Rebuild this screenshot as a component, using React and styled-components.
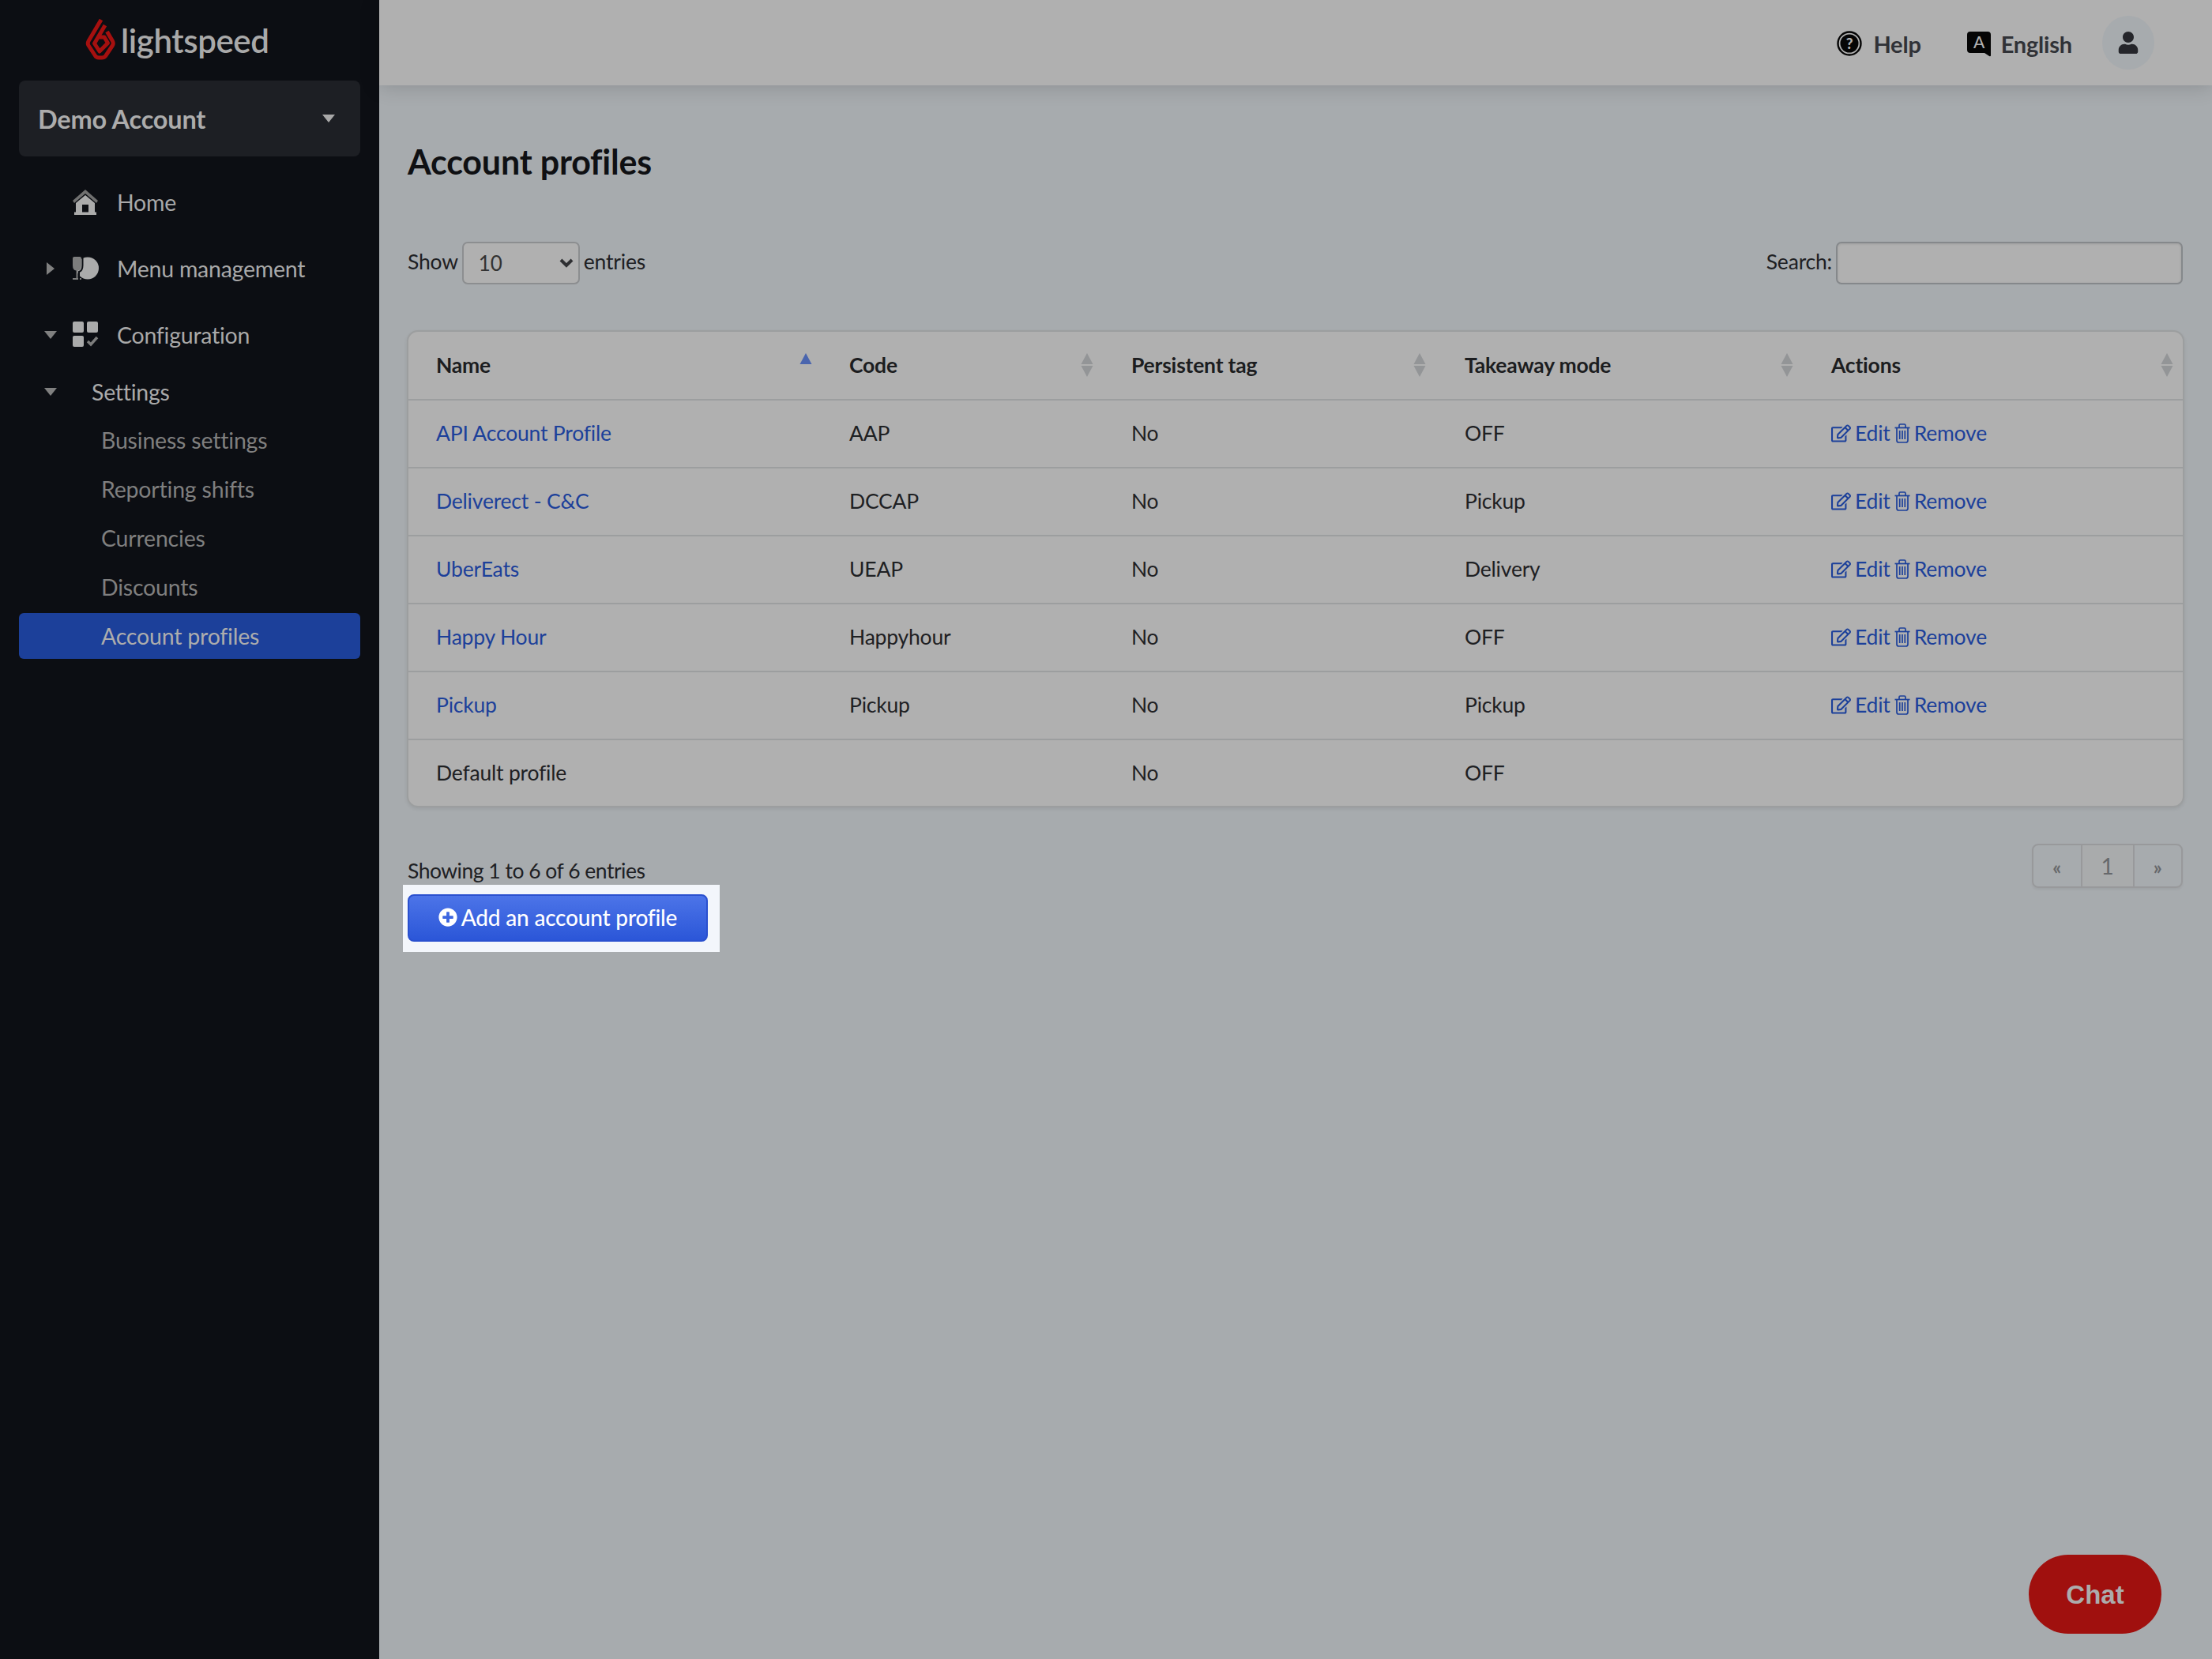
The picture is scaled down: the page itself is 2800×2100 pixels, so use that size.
import React from "react";
import styled, { createGlobalStyle } from "styled-components";
import { FaRegEdit, FaPlusCircle, FaUser } from "react-icons/fa";

const Global = createGlobalStyle`
  html, body { margin: 0; padding: 0; }
  body { font-family: Lato, "Noto Sans", sans-serif; background: #a7abae; }
  * { box-sizing: border-box; }
`;

const Page = styled.div`
  position: relative;
  display: flex;
  width: 2800px;
  height: 2100px;
  overflow: hidden;
  background: #a7abae;
  color: #1e2023;
`;

const Sidebar = styled.aside`
  flex: 0 0 480px;
  background: #0c0e13;
  padding: 0 24px;
  display: flex;
  flex-direction: column;
`;

const Brand = styled.div`
  height: 102px;
  padding: 22px 0 0 84px;
  display: flex;
  align-items: flex-start;
  gap: 7px;
`;

const BrandName = styled.span`
  font-size: 42px;
  line-height: 58px;
  font-weight: 600;
  color: #a9a9a9;
  letter-spacing: -0.4px;
`;

const AccountSelect = styled.div`
  height: 96px;
  background: #1d1f24;
  border-radius: 8px;
  padding: 0 32px 0 24px;
  display: flex;
  align-items: center;
  justify-content: space-between;
  margin-bottom: 16px;
`;

const AccountName = styled.span`
  font-size: 32.5px;
  font-weight: 700;
  color: #acacac;
  letter-spacing: -0.2px;
`;

const Caret = styled.span`
  display: block;
  width: 0;
  height: 0;
  border-style: solid;
  border-color: transparent;
  border-width: ${(p) => (p.$right ? "8px 0 8px 10px" : "10px 8px 0 8px")};
  ${(p) => (p.$right ? "border-left-color" : "border-top-color")}: ${(p) => p.$color || "#808080"};
`;

const NavItem = styled.div`
  height: ${(p) => p.$h}px;
  display: flex;
  align-items: center;
  color: ${(p) => p.$color};
  font-size: 28.5px;
  letter-spacing: -0.25px;
`;

const CaretSlot = styled.span`
  flex: 0 0 68px;
  display: flex;
  justify-content: center;
  margin-left: 6px;
  margin-right: -6px;
  width: 68px;
`;

const IconSlot = styled.span`
  flex: 0 0 56px;
  display: flex;
  align-items: center;
  svg { display: block; }
`;

const SettingsLabel = styled.span`
  margin-left: 24px;
`;

const SubItem = styled.div`
  height: ${(p) => (p.$active ? 58 : 62)}px;
  display: flex;
  align-items: center;
  padding-left: 104px;
  padding-bottom: ${(p) => (p.$active ? 1 : 0)}px;
  font-size: 28.5px;
  letter-spacing: -0.2px;
  border-radius: 6px;
  margin-top: ${(p) => (p.$active ? 2 : 0)}px;
  color: ${(p) => (p.$active ? "#adadad" : "#7f7f7f")};
  background: ${(p) => (p.$active ? "#1c409a" : "transparent")};
`;

const Main = styled.main`
  flex: 1;
  display: flex;
  flex-direction: column;
  min-width: 0;
`;

const TopBar = styled.header`
  height: 108px;
  background: #b0b0b0;
  box-shadow: 0 2px 24px rgba(0, 0, 0, 0.16);
  display: flex;
  align-items: center;
  justify-content: flex-end;
  padding: 0 73px 0 0;
  flex: none;
`;

const TopLink = styled.div`
  display: flex;
  align-items: center;
  gap: ${(p) => p.$gap}px;
  font-size: 29px;
  font-weight: 700;
  letter-spacing: -0.2px;
  color: #303237;
  margin-right: ${(p) => p.$mr}px;
  margin-top: 2px;
  svg { display: block; }
`;

const Avatar = styled.div`
  width: 66px;
  height: 68px;
  border-radius: 50%;
  background: #a7abae;
  display: flex;
  align-items: center;
  justify-content: center;
  color: #25262b;
`;

const Content = styled.div`
  padding: 0 37px 0 36px;
  flex: 1;
  display: flex;
  flex-direction: column;
`;

const Title = styled.h1`
  margin: 68px 0 0;
  font-size: 43px;
  line-height: 58px;
  font-weight: 700;
  letter-spacing: -0.2px;
  color: #0f1013;
`;

const Controls = styled.div`
  display: flex;
  justify-content: space-between;
  align-items: center;
  margin-top: 72px;
  font-size: 26.5px;
  letter-spacing: -0.2px;
  color: #1e2023;
`;

const Label = styled.label`
  display: flex;
  align-items: center;
  gap: 5px;
`;

const LabelText = styled.span`
  position: relative;
  top: -2px;
`;

const FakeSelect = styled.div`
  width: 149px;
  height: 54px;
  border: 2px solid #8c8e90;
  border-radius: 7px;
  background: #b0b0b0;
  display: flex;
  align-items: center;
  justify-content: space-between;
  padding: 0 6px 0 19px;
  font-size: 26px;
  color: #333;
`;

const SearchBox = styled.div`
  width: 439px;
  height: 54px;
  border: 2px solid #85888b;
  border-radius: 7px;
  background: #b0b0b0;
  box-shadow: inset 0 1px 3px rgba(0, 0, 0, 0.1);
`;

const TableCard = styled.div`
  margin: 58px 0 0 -1px;
  border: 2px solid #9c9e9f;
  border-radius: 14px;
  background: #b0b0b0;
  overflow: hidden;
  width: 2250px;
  box-shadow: 0 2px 4px rgba(0, 0, 0, 0.08);
`;

const Table = styled.table`
  width: 100%;
  table-layout: fixed;
  border-collapse: collapse;
  font-size: 26.5px;
  letter-spacing: -0.2px;
`;

const Th = styled.th`
  position: relative;
  height: 86px;
  padding: 0 0 2px 35px;
  text-align: left;
  font-weight: 700;
  color: #1c1d20;
  border-bottom: 2px solid #9c9e9f;
`;

const Td = styled.td`
  height: ${(p) => (p.$last ? 84 : 86)}px;
  padding: 0 0 2px 35px;
  color: #1e2023;
  border-bottom: ${(p) => (p.$last ? "none" : "2px solid #9c9e9f")};
`;

const BlueLink = styled.a`
  color: #1c409a;
  text-decoration: none;
`;

const Actions = styled.div`
  display: flex;
  align-items: center;
  gap: 5px;
`;

const ActionLink = styled.a`
  display: flex;
  align-items: center;
  gap: 5px;
  color: #1c409a;
  svg { display: block; }
`;

const SortIcons = styled.span`
  position: absolute;
  right: ${(p) => p.$right}px;
  top: 27px;
  width: 16px;
  height: 30px;
  display: block;
  svg { display: block; }
`;

const Footer = styled.div`
  display: flex;
  justify-content: space-between;
  align-items: flex-start;
  margin-top: 46px;
`;

const FooterLeft = styled.div`
  display: flex;
  flex-direction: column;
  align-items: flex-start;
`;

const Info = styled.div`
  font-size: 26.5px;
  letter-spacing: -0.5px;
  line-height: 34px;
  margin-top: 17px;
  color: #1e2023;
`;

const Highlight = styled.div`
  margin: 1px 0 0 -6px;
  padding: 12px 15px 13px 6px;
  background: #f3f6fb;
`;

const AddButton = styled.button`
  width: 380px;
  height: 60px;
  border-radius: 8px;
  border: 2px solid #2a50cf;
  background: linear-gradient(#4c74e8, #2b56d8);
  color: #fff;
  font: 500 28px Lato, sans-serif;
  letter-spacing: -0.2px;
  display: flex;
  align-items: center;
  justify-content: center;
  gap: 5px;
  padding: 0 0 2px;
  svg { display: block; }
`;

const Pagination = styled.div`
  display: flex;
  width: 191px;
  height: 56px;
  border: 2px solid #98999b;
  border-radius: 8px;
  overflow: hidden;
  box-shadow: 0 2px 3px rgba(0, 0, 0, 0.05);
`;

const PageCell = styled.div`
  flex: ${(p) => (p.$current ? "0 0 68px" : "1")};
  display: flex;
  align-items: center;
  justify-content: center;
  color: #66686b;
  font-size: ${(p) => (p.$current ? 28 : 24)}px;
  font-weight: ${(p) => (p.$current ? 400 : 700)};
  padding-top: ${(p) => (p.$current ? 0 : 2)}px;
  background: ${(p) => (p.$current ? "#a9abac" : "transparent")};
  border-left: ${(p) => (p.$current ? "2px solid #98999b" : "none")};
  border-right: ${(p) => (p.$current ? "2px solid #98999b" : "none")};
`;

const ChatButton = styled.div`
  position: absolute;
  left: 2568px;
  top: 1968px;
  width: 168px;
  height: 100px;
  border-radius: 50px;
  background: #a0100e;
  color: #acacac;
  font: 700 33px "Liberation Sans", Arial, sans-serif;
  display: flex;
  align-items: center;
  justify-content: center;
  padding-top: 2px;
`;

const LogoMark = () => (
  <svg width="38" height="54" viewBox="0 0 38 54" fill="none" stroke="#a6100f" strokeWidth="5" strokeLinejoin="round">
    <path d="M20 3 L4 30 Q2.5 33 4 35.5 L12.5 48.5 Q14 51 17 51 H21 Q24 51 25.5 49 L34.5 35.5 Q36 33 34.5 30 L27.5 18" />
    <path d="M25 10 L11.5 33 L18 43 L28.5 32.5 L24 25 H17" />
  </svg>
);

const HomeIcon = () => (
  <svg width="32" height="32" viewBox="0 0 32 32">
    <path d="M0 14 L16 0 L32 14 L30 17 L16 5 L2 17 Z" fill="#707070" />
    <path d="M4 17 L16 7 L28 17 V29 H20 V19 H12 V29 H4 Z" fill="#ababab" />
    <path d="M2 28.5 H30 V32 H2 Z" fill="#ababab" />
  </svg>
);

const MenuIcon = () => (
  <svg width="33" height="30" viewBox="0 0 33 30">
    <circle cx="19" cy="14.5" r="14" fill="#ababab" />
    <path d="M0 2 Q0 0 2 0 H9 Q11 0 11 2 V11 Q11 17 6.5 17.5 V27 H11 V29 H0 V27 H4.5 V17.5 Q0 17 0 11 Z" fill="#7d7d7d" />
    <path d="M12.5 0 V11 Q12.5 18 8 19 V29" fill="none" stroke="#0c0e13" strokeWidth="2" />
  </svg>
);

const ConfigIcon = () => (
  <svg width="34" height="34" viewBox="0 0 34 34">
    <rect x="0" y="0" width="14" height="14" rx="2" fill="#ababab" />
    <rect x="18" y="0" width="14" height="14" rx="2" fill="#ababab" />
    <rect x="0" y="18" width="14" height="14" rx="2" fill="#ababab" />
    <path d="M19 25 L23 29 L31 20" fill="none" stroke="#7d7d7d" strokeWidth="3.4" />
  </svg>
);

const HelpIcon = () => (
  <svg width="32" height="32" viewBox="0 0 32 32">
    <circle cx="16" cy="16" r="14.5" fill="none" stroke="#050505" strokeWidth="2.4" />
    <circle cx="16" cy="16" r="11.5" fill="#050505" />
    <text x="16" y="22.5" textAnchor="middle" fontFamily="Lato, sans-serif" fontWeight="900" fontSize="19" fill="#b0b0b0">?</text>
  </svg>
);

const LangIcon = () => (
  <svg width="32" height="33" viewBox="0 0 32 33">
    <path d="M5 1 H27 Q31 1 31 5 V31 Q31 33 29 32 L23 28 H5 Q1 28 1 24 V5 Q1 1 5 1 Z" fill="#050505" />
    <text x="16" y="22" textAnchor="middle" fontFamily="Lato, sans-serif" fontWeight="500" fontSize="21" fill="#b0b0b0">A</text>
  </svg>
);

const TrashIcon = () => (
  <svg width="20" height="25" viewBox="0 0 20 25" fill="none" stroke="#1c409a" strokeWidth="1.7">
    <path d="M0.5 5.5 H19.5" />
    <path d="M6 5 V2.5 Q6 1 7.5 1 H12.5 Q14 1 14 2.5 V5" />
    <path d="M3 5.5 V21.5 Q3 24 5.5 24 H14.5 Q17 24 17 21.5 V5.5" />
    <path d="M6.7 9 V20 M10 9 V20 M13.3 9 V20" />
  </svg>
);

const SortGlyph = ({ up, down }) => (
  <svg width="16" height="30" viewBox="0 0 16 30">
    {up !== "none" && <path d="M8 0 L15.5 14 H0.5 Z" fill={up} />}
    {down !== "none" && <path d="M8 30 L15.5 16 H0.5 Z" fill={down} />}
  </svg>
);

const Chevron = () => (
  <svg width="18" height="14" viewBox="0 0 18 14">
    <path d="M2 3 L9 10 L16 3" fill="none" stroke="#2f3033" strokeWidth="4" />
  </svg>
);

const columns = [
  { name: "Name", width: 523, right: 12, active: true },
  { name: "Code", width: 357, right: 13 },
  { name: "Persistent tag", width: 422, right: 14 },
  { name: "Takeaway mode", width: 464, right: 13 },
  { name: "Actions", width: 480, right: 12 },
];

const rows = [
  ["API Account Profile", "AAP", "No", "OFF", true],
  ["Deliverect - C&C", "DCCAP", "No", "Pickup", true],
  ["UberEats", "UEAP", "No", "Delivery", true],
  ["Happy Hour", "Happyhour", "No", "OFF", true],
  ["Pickup", "Pickup", "No", "Pickup", true],
  ["Default profile", "", "No", "OFF", false],
];

export default function App() {
  return (
    <Page>
      <Global />
      <Sidebar>
        <Brand>
          <LogoMark />
          <BrandName>lightspeed</BrandName>
        </Brand>
        <AccountSelect>
          <AccountName>Demo Account</AccountName>
          <Caret $color="#a8a8a8" />
        </AccountSelect>
        <NavItem $h={84} $color="#a9a9a9">
          <CaretSlot />
          <IconSlot><HomeIcon /></IconSlot>
          Home
        </NavItem>
        <NavItem $h={84} $color="#a9a9a9">
          <CaretSlot><Caret $right /></CaretSlot>
          <IconSlot><MenuIcon /></IconSlot>
          Menu management
        </NavItem>
        <NavItem $h={84} $color="#a9a9a9">
          <CaretSlot><Caret /></CaretSlot>
          <IconSlot><ConfigIcon /></IconSlot>
          Configuration
        </NavItem>
        <NavItem $h={60} $color="#a9a9a9">
          <CaretSlot><Caret /></CaretSlot>
          <SettingsLabel>Settings</SettingsLabel>
        </NavItem>
        <SubItem>Business settings</SubItem>
        <SubItem>Reporting shifts</SubItem>
        <SubItem>Currencies</SubItem>
        <SubItem>Discounts</SubItem>
        <SubItem $active>Account profiles</SubItem>
      </Sidebar>
      <Main>
        <TopBar>
          <TopLink $gap={14} $mr={57}><HelpIcon />Help</TopLink>
          <TopLink $gap={12} $mr={38}><LangIcon />English</TopLink>
          <Avatar><FaUser size={28} /></Avatar>
        </TopBar>
        <Content>
          <Title>Account profiles</Title>
          <Controls>
            <Label>
              <LabelText>Show</LabelText>
              <FakeSelect>10<Chevron /></FakeSelect>
              <LabelText>entries</LabelText>
            </Label>
            <Label>
              <LabelText>Search:</LabelText>
              <SearchBox />
            </Label>
          </Controls>
          <TableCard>
            <Table>
              <colgroup>
                {columns.map((c) => <col key={c.name} style={{ width: c.width }} />)}
              </colgroup>
              <thead>
                <tr>
                  {columns.map((c) => (
                    <Th key={c.name}>
                      {c.name}
                      <SortIcons $right={c.right}>
                        {c.active ? <SortGlyph up="#4a65ae" down="none" /> : <SortGlyph up="#939597" down="#939597" />}
                      </SortIcons>
                    </Th>
                  ))}
                </tr>
              </thead>
              <tbody>
                {rows.map((r, i) => (
                  <tr key={r[0]}>
                    <Td $last={i === rows.length - 1}>
                      {r[4] ? <BlueLink>{r[0]}</BlueLink> : r[0]}
                    </Td>
                    <Td $last={i === rows.length - 1}>{r[1]}</Td>
                    <Td $last={i === rows.length - 1}>{r[2]}</Td>
                    <Td $last={i === rows.length - 1}>{r[3]}</Td>
                    <Td $last={i === rows.length - 1}>
                      {r[4] && (
                        <Actions>
                          <ActionLink><FaRegEdit size={25} />Edit</ActionLink>
                          <ActionLink><TrashIcon />Remove</ActionLink>
                        </Actions>
                      )}
                    </Td>
                  </tr>
                ))}
              </tbody>
            </Table>
          </TableCard>
          <Footer>
            <FooterLeft>
              <Info>Showing 1 to 6 of 6 entries</Info>
              <Highlight>
                <AddButton><FaPlusCircle size={24} />Add an account profile</AddButton>
              </Highlight>
            </FooterLeft>
            <Pagination>
              <PageCell>«</PageCell>
              <PageCell $current>1</PageCell>
              <PageCell>»</PageCell>
            </Pagination>
          </Footer>
        </Content>
      </Main>
      <ChatButton>Chat</ChatButton>
    </Page>
  );
}
